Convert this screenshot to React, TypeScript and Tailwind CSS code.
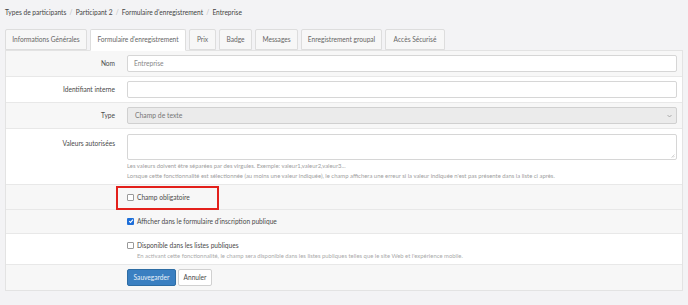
import React from "react";

const font = { fontFamily: "Lato, 'Open Sans', 'Liberation Sans', sans-serif" };

function Row({ bg, h, label, top, children }: { bg: string; h: string; label?: string; top?: boolean; children: React.ReactNode }) {
  return (
    <div className={`flex border-b border-[#e8e8e8] ${bg} ${h} ${top ? "items-start" : "items-center"}`}>
      <div className={`w-[109px] shrink-0 text-right text-[6.6px] text-[#4a4a4a] ${top ? "pt-[10px]" : ""}`}>{label}</div>
      <div className={`ml-[12px] mr-[5px] flex-1 ${top ? "pt-[5px]" : ""}`}>{children}</div>
    </div>
  );
}

function Box({ checked }: { checked?: boolean }) {
  return checked ? (
    <span className="w-[7px] h-[7px] rounded-[1px] bg-[#1e6fd9] flex items-center justify-center shrink-0">
      <svg width="6" height="6" viewBox="0 0 10 10"><path d="M2 5.2 L4.2 7.4 L8.2 2.6" stroke="white" strokeWidth="1.8" fill="none" /></svg>
    </span>
  ) : (
    <span className="w-[7px] h-[7px] rounded-[1px] border border-[#999] bg-white shrink-0" />
  );
}

export default function App() {
  const tabs: [string, string][] = [
    ["Informations Générales", "w-[82px]"],
    ["Formulaire d'enregistrement", "w-[96px]"],
    ["Prix", "w-[27px]"],
    ["Badge", "w-[33px]"],
    ["Messages", "w-[43px]"],
    ["Enregistrement groupal", "w-[81px]"],
    ["Accès Sécurisé", "w-[60px]"],
  ];
  return (
    <div style={font} className="w-[688px] h-[305px] bg-[#f3f3f5] overflow-hidden">
      <div className="h-[25px] flex items-center px-[5px] text-[6.6px] text-[#444] gap-[3.2px]">
        <span>Types de participants</span><span className="text-[#bbb]">/</span>
        <span>Participant 2</span><span className="text-[#bbb]">/</span>
        <span>Formulaire d'enregistrement</span><span className="text-[#bbb]">/</span>
        <span>Entreprise</span>
      </div>
      <div className="flex gap-[3px] pl-[5px] h-[25px] items-end">
        {tabs.map(([t, w], i) => (
          <div
            key={t}
            className={`${w} h-[21px] flex items-center justify-center text-[6.6px] text-[#666] border border-[#ddd] rounded-t-[2px] ${i === 1 ? "bg-white border-b-white h-[22px] -mb-px relative z-10" : "bg-[#f7f7f7]"}`}
          >
            {t}
          </div>
        ))}
      </div>
      <div className="mx-[5px] border border-[#e3e3e3] border-b-0 bg-white">
        <Row bg="bg-[#f7f7f7]" h="h-[26px]" label="Nom">
          <div className="h-[17px] border border-[#d6d6d6] rounded-[2px] bg-white flex items-center pl-[6px] text-[6.6px] text-[#888]">Entreprise</div>
        </Row>
        <Row bg="bg-white" h="h-[26px]" label="Identifiant interne">
          <div className="h-[17px] border border-[#d6d6d6] rounded-[2px] bg-white" />
        </Row>
        <Row bg="bg-[#f7f7f7]" h="h-[26px]" label="Type">
          <div className="h-[17px] border border-[#d0d0d0] rounded-[2px] bg-[#ebebeb] flex items-center justify-between pl-[7px] pr-[4px] text-[6.8px] text-[#777]">
            <span>Champ de texte</span>
            <svg width="5" height="4" viewBox="0 0 10 8"><path d="M1 2 L5 6 L9 2" stroke="#999" strokeWidth="1.5" fill="none" /></svg>
          </div>
        </Row>
        <Row bg="bg-white" h="h-[56px]" label="Valeurs autorisées" top>
          <div className="h-[26px] border border-[#d6d6d6] rounded-[2px] bg-white relative">
            <svg className="absolute right-[1px] bottom-[1px]" width="4" height="4" viewBox="0 0 8 8"><path d="M7 1 L1 7 M7 4 L4 7" stroke="#aaa" strokeWidth="1" /></svg>
          </div>
          <div className="text-[5.9px] text-[#a0a0a0] leading-[10px] mt-[1px]">
            <div>Les valeurs doivent être séparées par des virgules. Exemple: valeur1,valeur2,valeur3...</div>
            <div>Lorsque cette fonctionnalité est sélectionnée (au moins une valeur indiquée), le champ affichera une erreur si la valeur indiquée n'est pas présente dans la liste ci après.</div>
          </div>
        </Row>
        <div className="relative flex items-center h-[25px] border-b border-[#e8e8e8] bg-[#f7f7f7]">
          <div className="w-[121px] shrink-0" />
          <div className="flex items-center gap-[3px] text-[6.6px] text-[#4a4a4a] pt-[2px]">
            <Box />
            <span>Champ obligatoire</span>
          </div>
          <div className="absolute left-[110px] top-[1px] w-[103px] h-[24px] border-2 border-[#e3201b]" />
        </div>
        <div className="flex items-center h-[24px] border-b border-[#e8e8e8] bg-[#f7f7f7]">
          <div className="w-[121px] shrink-0" />
          <div className="flex items-center gap-[3px] text-[6.6px] text-[#4a4a4a]">
            <Box checked />
            <span>Afficher dans le formulaire d'inscription publique</span>
          </div>
        </div>
        <div className="flex items-start h-[31px] border-b border-[#e8e8e8] bg-white pt-[7px]">
          <div className="w-[121px] shrink-0" />
          <div>
            <div className="flex items-center gap-[3px] text-[6.6px] text-[#4a4a4a]">
              <Box />
              <span>Disponible dans les listes publiques</span>
            </div>
            <div className="pl-[10px] text-[5.9px] text-[#aaa] mt-[1px]">
              En activant cette fonctionnalité, le champ sera disponible dans les listes publiques telles que le site Web et l'expérience mobile.
            </div>
          </div>
        </div>
        <div className="flex items-center h-[26px] border-b border-[#e3e3e3] bg-[#f7f7f7]">
          <div className="w-[121px] shrink-0" />
          <div className="flex items-center gap-[2px]">
            <div className="w-[49px] h-[17px] bg-[#3a7fc1] border border-[#2e6da4] rounded-[2px] text-[#e8f0f8] text-[6.6px] flex items-center justify-center">Sauvegarder</div>
            <div className="w-[34px] h-[17px] bg-white border border-[#d0d0d0] rounded-[2px] text-[#4a4a4a] text-[6.6px] flex items-center justify-center">Annuler</div>
          </div>
        </div>
      </div>
    </div>
  );
}
